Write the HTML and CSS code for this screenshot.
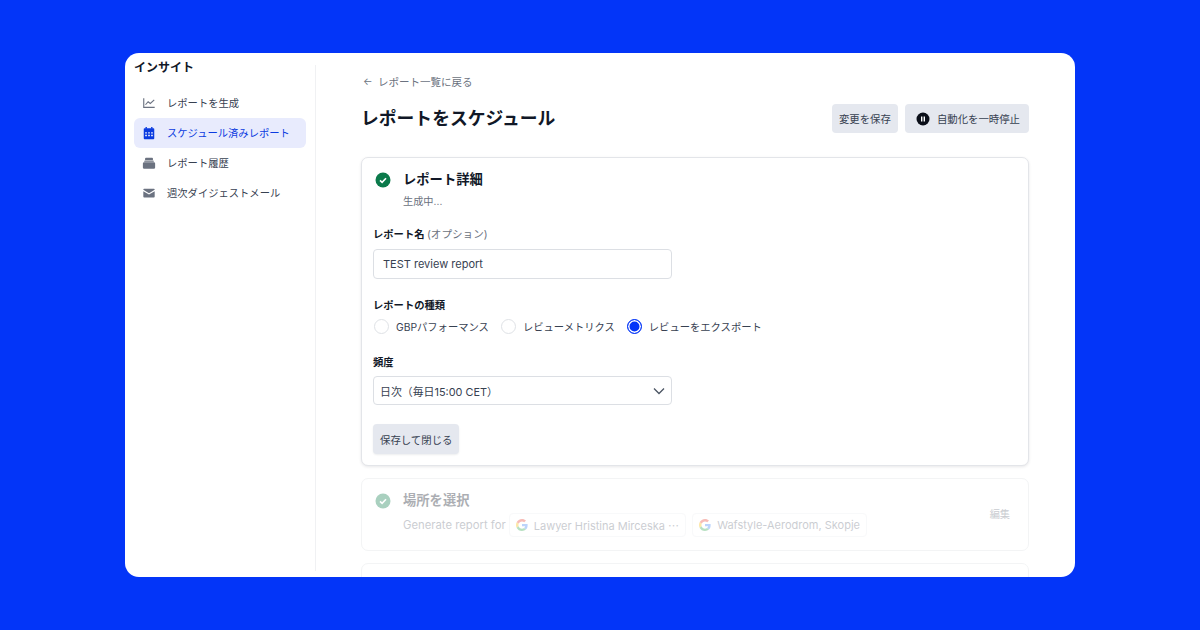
FILE: index.html
```html
<!DOCTYPE html>
<html lang="ja">
<head>
  <meta charset="UTF-8" />
  <title>レポートをスケジュール</title>
  <link rel="stylesheet" href="styles.css">
</head>
<body>
  <div class="window">
    <aside class="sidebar">
      <h2 class="side-title">インサイト</h2>
      <a class="side-item">
        <svg class="side-icon" viewBox="0 0 16 16" fill="none" stroke="#6b7280" stroke-width="1.3"><path d="M2 2.5v10.500h12.500"/><path d="M4 10l3-3.500 2.500 2L14 4.500"/></svg>
        <span>レポートを生成</span>
      </a>
      <a class="side-item active">
        <svg class="side-icon" viewBox="0 0 16 16" fill="#0b3be0"><path d="M4 1h1.600v2H4zM10.400 1H12v2h-1.600z"/><path fill-rule="evenodd" d="M2 3.500A1 1 0 0 1 3 2.500h10a1 1 0 0 1 1 1V14a1 1 0 0 1-1 1H3a1 1 0 0 1-1-1zM3.600 7v1.600h2V7zm3.400 0v1.600h2V7zm3.400 0v1.600h2V7zm-6.800 3v1.600h2V10zm3.400 0v1.600h2V10zm3.400 0v1.600h2V10z"/></svg>
        <span>スケジュール済みレポート</span>
      </a>
      <a class="side-item">
        <svg class="side-icon" viewBox="0 0 16 16" fill="#6b7280"><path d="M4.500 2h7a1 1 0 0 1 1 1v1.500h-9V3a1 1 0 0 1 1-1z"/><path d="M3.500 5h9a1 1 0 0 1 1 1v.6h-11V6a1 1 0 0 1 1-1z"/><path d="M2.500 7h11A1.500 1.500 0 0 1 15 8.500v4.500a1.500 1.500 0 0 1-1.500 1.500h-11A1.500 1.500 0 0 1 1 13V8.500A1.500 1.500 0 0 1 2.500 7z"/></svg>
        <span>レポート履歴</span>
      </a>
      <a class="side-item">
        <svg class="side-icon" viewBox="0 0 16 16" fill="#6b7280"><path d="M1.500 4a1 1 0 0 1 1-1h11a1 1 0 0 1 1 1v.4L8 8.300 1.500 4.400z"/><path d="M1.500 5.900L8 9.800l6.500-3.900V12a1 1 0 0 1-1 1h-11a1 1 0 0 1-1-1z"/></svg>
        <span>週次ダイジェストメール</span>
      </a>
    </aside>

    <main class="main">
      <a class="back-link"><span class="back-arrow">←</span>レポート一覧に戻る</a>
      <div class="page-head">
        <h1 class="page-title">レポートをスケジュール</h1>
        <div class="page-actions">
          <button class="btn">変更を保存</button>
          <button class="btn btn-pause">
            <svg class="pause-icon" viewBox="0 0 14 14"><circle cx="7" cy="7" r="6.500" fill="#0b0f19"/><path d="M5 4.500h1.400v5H5zM7.600 4.500H9v5H7.600z" fill="#fff"/></svg>
            自動化を一時停止
          </button>
        </div>
      </div>

      <section class="card card-open">
        <div class="step-head">
          <svg class="check" viewBox="0 0 16 16"><circle cx="8" cy="8" r="7.500" fill="#0b7a4b"/><path d="M5 8.300l2.100 2L11 6.200" fill="none" stroke="#fff" stroke-width="1.600"/></svg>
          <h3 class="step-title">レポート詳細</h3>
        </div>
        <p class="step-sub">生成中...</p>

        <label class="field-label label-name">レポート名 <span class="optional">(オプション)</span></label>
        <div class="input">TEST review report</div>

        <label class="field-label label-type">レポートの種類</label>
        <div class="radios">
          <span class="radio-item"><span class="radio"></span>GBPパフォーマンス</span>
          <span class="radio-item"><span class="radio"></span>レビューメトリクス</span>
          <span class="radio-item"><span class="radio checked"></span>レビューをエクスポート</span>
        </div>

        <label class="field-label label-freq">頻度</label>
        <div class="select">
          日次（毎日15:00 CET）
          <svg class="chevron" viewBox="0 0 12 8" fill="none" stroke="#4b5563" stroke-width="1.300"><path d="M1 1.500l5 5 5-5"/></svg>
        </div>

        <button class="btn btn-close">保存して閉じる</button>
      </section>

      <section class="card card-faded">
        <div class="faded-body">
          <div class="step-head">
            <svg class="check" viewBox="0 0 16 16"><circle cx="8" cy="8" r="7.500" fill="#0b7a4b"/><path d="M5 8.300l2.100 2L11 6.200" fill="none" stroke="#fff" stroke-width="1.600"/></svg>
            <h3 class="step-title">場所を選択</h3>
          </div>
          <div class="places">
            <span class="places-label">Generate report for</span>
            <span class="chip">
              <svg class="g-logo" viewBox="0 0 48 48"><path fill="#EA4335" d="M24 9.500c3.500 0 6.700 1.300 9.200 3.500l6.800-6.800C35.900 2.400 30.500 0 24 0 14.600 0 6.500 5.400 2.600 13.200l8 6.200C12.400 13.700 17.700 9.500 24 9.500z"/><path fill="#4285F4" d="M46.500 24.500c0-1.600-.1-3.100-.4-4.500H24v9h12.700c-.6 2.900-2.200 5.400-4.700 7.100l7.700 6c4.500-4.200 6.800-10.300 6.800-17.600z"/><path fill="#FBBC05" d="M10.600 28.600c-.5-1.400-.8-3-.8-4.600s.3-3.200.8-4.600l-8-6.200C.9 16.500 0 20.100 0 24s.9 7.500 2.600 10.800z"/><path fill="#34A853" d="M24 48c6.500 0 11.900-2.100 15.800-5.800l-7.700-6c-2.100 1.400-4.900 2.300-8.100 2.300-6.300 0-11.600-4.200-13.500-9.900l-8 6.200C6.500 42.600 14.600 48 24 48z"/></svg>
              Lawyer Hristina Mirceska ⋯
            </span>
            <span class="chip">
              <svg class="g-logo" viewBox="0 0 48 48"><path fill="#EA4335" d="M24 9.500c3.500 0 6.700 1.300 9.200 3.500l6.800-6.800C35.900 2.400 30.500 0 24 0 14.600 0 6.500 5.400 2.600 13.200l8 6.200C12.400 13.700 17.700 9.500 24 9.500z"/><path fill="#4285F4" d="M46.500 24.500c0-1.600-.1-3.100-.4-4.500H24v9h12.700c-.6 2.900-2.200 5.400-4.700 7.100l7.700 6c4.500-4.200 6.800-10.300 6.800-17.600z"/><path fill="#FBBC05" d="M10.600 28.600c-.5-1.400-.8-3-.8-4.600s.3-3.200.8-4.600l-8-6.200C.9 16.500 0 20.100 0 24s.9 7.500 2.600 10.800z"/><path fill="#34A853" d="M24 48c6.500 0 11.900-2.100 15.800-5.800l-7.700-6c-2.100 1.400-4.900 2.300-8.100 2.300-6.300 0-11.600-4.200-13.500-9.900l-8 6.200C6.500 42.600 14.600 48 24 48z"/></svg>
              Wafstyle-Aerodrom, Skopje
            </span>
          </div>
        </div>
        <span class="edit-link">編集</span>
      </section>

      <section class="card card-next"></section>
    </main>
  </div>
</body>
</html>
```

FILE: styles.css
```css
* {
  box-sizing: border-box;
}
body {
  margin: 0;
  height: 630px;
  overflow: hidden;
  background-color: #0335f8;
  font-family: Inter, "Noto Sans CJK JP", sans-serif;
  color: #111827;
  display: flex;
  align-items: flex-start;
  justify-content: center;
  padding-top: 53px;
}
.window {
  width: 950px;
  height: 524px;
  background-color: #fff;
  border-radius: 14px;
  overflow: hidden;
  display: flex;
}
.sidebar {
  width: 191px;
  height: 506px;
  margin-top: 12px;
  padding: 0 9px;
  border-right: 1px solid #f0f1f3;
  flex-shrink: 0;
}
.side-title {
  margin: -7px 0 10px;
  font-size: 12px;
  line-height: 20px;
  font-weight: 700;
  color: #111827;
}
.side-item {
  display: flex;
  align-items: center;
  gap: 11px;
  width: 172px;
  height: 30px;
  padding-left: 8px;
  border-radius: 6px;
  font-size: 10.300px;
  color: #374151;
}
.side-item span {
  margin-top: -2px;
}
.side-item.active {
  background-color: #e8ebfd;
  color: #0b3be0;
}
.side-icon {
  width: 14px;
  height: 14px;
  flex-shrink: 0;
}
.main {
  width: 668px;
  margin-left: 45px;
  padding-top: 20px;
}
.back-link {
  display: flex;
  align-items: center;
  height: 16px;
  font-size: 10.500px;
  color: #6b7280;
}
.back-arrow {
  width: 17px;
  padding-left: 2px;
  font-size: 10px;
}
.page-head {
  display: flex;
  justify-content: space-between;
  align-items: center;
  margin-top: 15px;
  height: 29px;
}
.page-title {
  margin: 0 0 4px;
  font-size: 17.800px;
  font-weight: 700;
  color: #111827;
}
.page-actions {
  display: flex;
  gap: 7px;
}
.btn {
  display: inline-flex;
  align-items: center;
  height: 29px;
  padding: 0 7px;
  border: none;
  border-radius: 4px;
  background-color: #e5e8ef;
  font-family: inherit;
  font-size: 10.400px;
  color: #374151;
}
.btn-pause {
  gap: 7px;
  padding: 0 9px 0 11px;
}
.pause-icon {
  width: 14px;
  height: 14px;
}
.card {
  border: 1px solid #e3e5e9;
  border-radius: 7px;
  background-color: #fff;
}
.card-open {
  margin-top: 24px;
  height: 309px;
  padding: 12px 11px 0;
  box-shadow: 0 1px 3px rgba(17, 24, 39, 0.1);
}
.step-head {
  display: flex;
  align-items: center;
  gap: 12px;
  padding-left: 2px;
  height: 20px;
}
.check {
  width: 16px;
  height: 16px;
  flex-shrink: 0;
}
.step-title {
  margin: -3px 0 0;
  font-size: 13.300px;
  font-weight: 700;
  color: #111827;
}
.step-sub {
  margin: 4px 0 0 30px;
  font-size: 10.200px;
  line-height: 14px;
  color: #6b7280;
}
.field-label {
  display: block;
  font-size: 10.300px;
  line-height: 14px;
  font-weight: 700;
  color: #111827;
}
.optional {
  font-size: 10.600px;
  font-weight: 400;
  color: #6b7280;
}
.label-name {
  margin-top: 19px;
}
.input, .select {
  display: flex;
  align-items: center;
  width: 299px;
  border: 1px solid #dcdfe4;
  border-radius: 4px;
  color: #374151;
}
.input {
  height: 30px;
  margin-top: 7px;
  padding-left: 9px;
  font-size: 11px;
}
.select {
  justify-content: space-between;
  height: 29px;
  margin-top: 7px;
  padding: 0 6px;
  font-size: 10.900px;
}
.chevron {
  width: 12px;
  height: 8px;
}
.label-type {
  margin-top: 19px;
}
.radios {
  display: flex;
  gap: 12px;
  margin: 6px 0 0 1px;
}
.radio-item {
  display: flex;
  align-items: center;
  gap: 7px;
  height: 16px;
  font-size: 10.300px;
  color: #374151;
}
.radio {
  width: 15px;
  height: 15px;
  border: 1px solid #dfe2e6;
  border-radius: 50%;
  background-color: #fff;
}
.radio.checked {
  border-color: #0335f8;
  background-color: #0335f8;
  box-shadow: inset 0 0 0 1.500px #fff;
}
.label-freq {
  margin-top: 21px;
}
.btn-close {
  height: 30px;
  margin-top: 19px;
  box-shadow: 0 1px 2px rgba(17, 24, 39, 0.08);
}
.card-faded {
  margin-top: 12px;
  height: 73px;
  padding: 12px 11px 0;
  border-color: #f3f4f5;
  display: flex;
  justify-content: space-between;
  align-items: flex-start;
}
.faded-body {
  opacity: 0.35;
}
.places {
  display: flex;
  align-items: center;
  gap: 3px;
  margin: 2px 0 0 30px;
}
.places-label {
  font-size: 11.300px;
  color: #6b7280;
}
.chip {
  display: flex;
  align-items: center;
  gap: 6px;
  height: 24px;
  padding: 0 6px;
  margin-right: 3px;
  border: 1px solid #eceef1;
  border-radius: 4px;
  font-size: 11px;
  color: #6b7280;
}
.g-logo {
  width: 12px;
  height: 12px;
}
.edit-link {
  margin: 15px 7px 0 0;
  font-size: 10.200px;
  color: #c9ccd1;
}
.card-next {
  margin-top: 12px;
  height: 60px;
  border-color: #f3f4f5;
}
```
